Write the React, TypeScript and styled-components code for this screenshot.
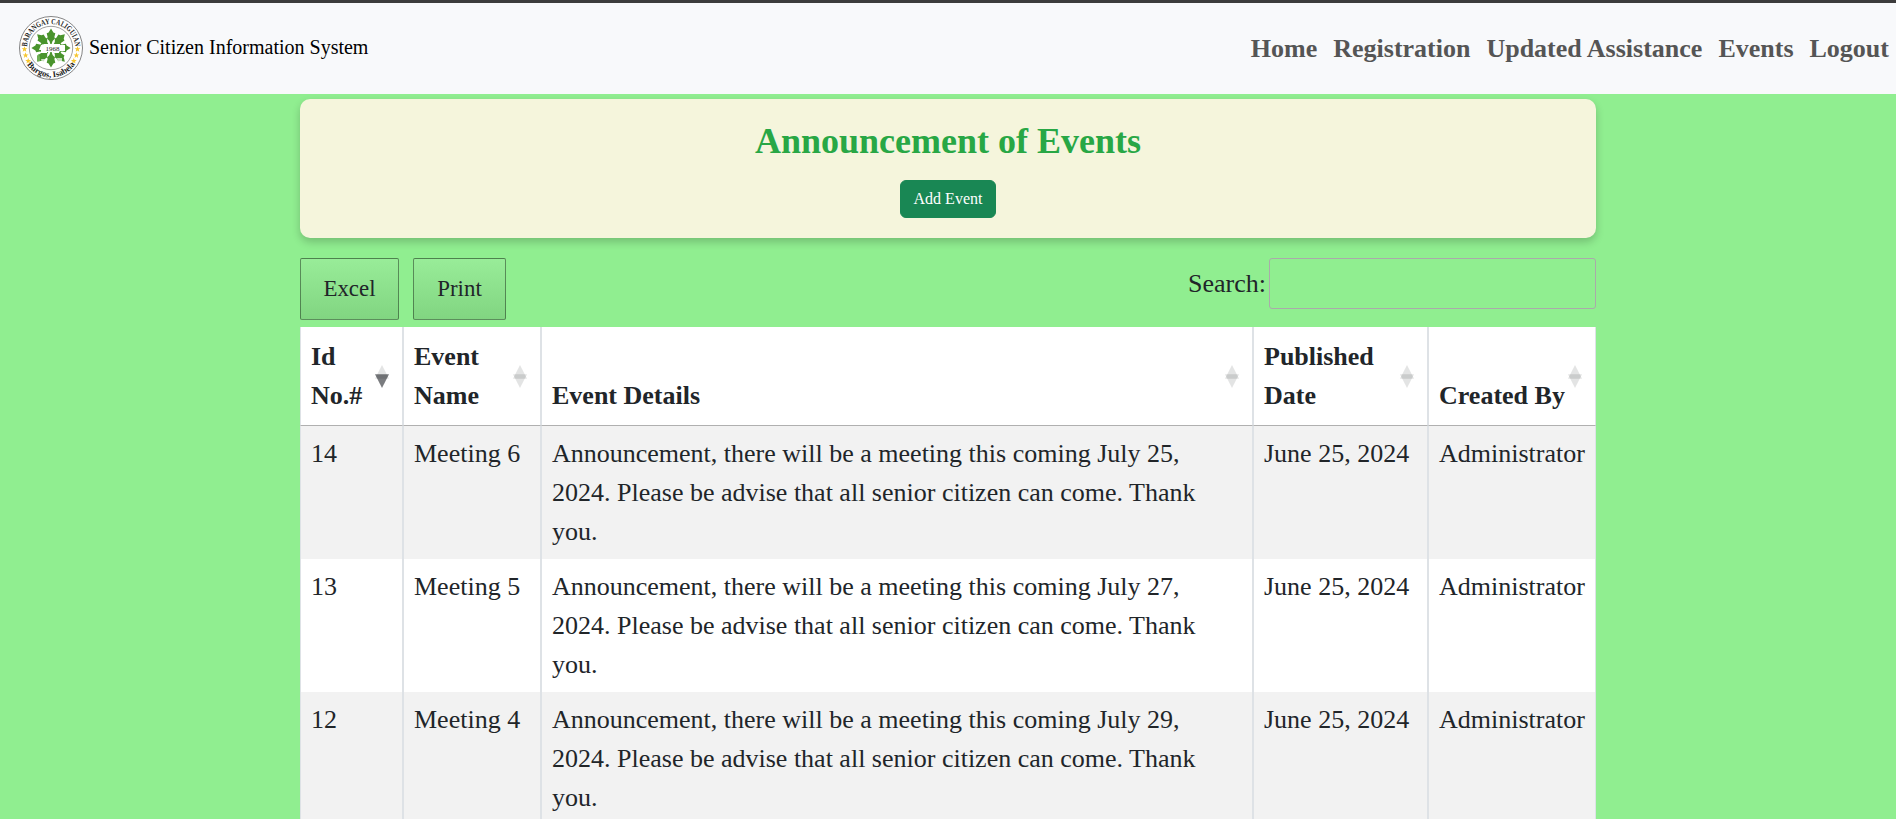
import React from 'react';
import styled, { createGlobalStyle, css } from 'styled-components';

const GlobalStyle = createGlobalStyle`
  *, *::before, *::after { box-sizing: border-box; }
  html, body { margin: 0; padding: 0; }
  body {
    height: 819px;
    overflow: hidden;
    background: #90ee90;
    color: #212529;
    font-family: 'Liberation Serif', 'Times New Roman', serif;
    font-size: 26px;
    line-height: 1.5;
  }
`;

const Page = styled.div`
  height: 819px;
  overflow: hidden;
`;

const Navbar = styled.header`
  display: flex;
  align-items: center;
  justify-content: space-between;
  height: 94px;
  padding: 0 7px 0 18px;
  border-top: 3px solid #3c3c3c;
  background: #f8f9fb;
`;

const Brand = styled.a`
  display: flex;
  align-items: center;
  gap: 5px;
  padding-bottom: 1px;
  color: #000;
  font-size: 20px;
  line-height: 30px;
  text-decoration: none;
`;

const BrandName = styled.span`
  padding-bottom: 3px;
`;

const Nav = styled.nav`
  display: flex;
  gap: 16px;
`;

const NavLink = styled.a`
  color: #555;
  font-weight: 700;
  line-height: 39px;
  text-decoration: none;
`;

const Container = styled.main`
  width: 1296px;
  margin: 0 auto;
  padding-top: 5px;
`;

const Card = styled.section`
  display: flex;
  flex-direction: column;
  align-items: center;
  height: 139px;
  padding-top: 21px;
  border-radius: 10px;
  background: #f5f5dc;
  box-shadow: 0 4px 8px rgba(0, 0, 0, 0.2);
`;

const Title = styled.h1`
  margin: 0 0 17px;
  color: #28a745;
  font-size: 36px;
  font-weight: 700;
  line-height: 43px;
`;

const AddButton = styled.button`
  width: 96px;
  height: 38px;
  padding: 0;
  border: 1px solid #198754;
  border-radius: 6px;
  background: #198754;
  color: #fff;
  font: 16px/24px 'Liberation Serif', 'Times New Roman', serif;
`;

const Toolbar = styled.div`
  display: flex;
  align-items: flex-start;
  justify-content: space-between;
  height: 69px;
  margin-top: 20px;
`;

const ButtonGroup = styled.div`
  display: flex;
  gap: 14px;
`;

const ExportButton = styled.button<{ $width: number }>`
  width: ${(p) => p.$width}px;
  height: 62px;
  padding: 0 0 2px;
  border: 1px solid rgba(0, 0, 0, 0.4);
  border-radius: 2px;
  background: linear-gradient(to bottom, rgba(230, 230, 230, 0.1) 0%, rgba(0, 0, 0, 0.1) 100%);
  color: #212529;
  font: 22.88px/37px 'Liberation Serif', 'Times New Roman', serif;
`;

const SearchLabel = styled.label`
  display: flex;
  align-items: center;
  gap: 3px;
`;

const SearchInput = styled.input`
  width: 327px;
  height: 51px;
  padding: 5px;
  border: 1px solid #aaa;
  border-radius: 3px;
  background: transparent;
  font: inherit;
`;

const Table = styled.table`
  width: 1296px;
  table-layout: fixed;
  border-collapse: separate;
  border-spacing: 0;
`;

const Column = styled.col<{ $width: number }>`
  width: ${(p) => p.$width}px;
`;

const cell = css`
  border-left: 1px solid #dee2e6;
  border-right: 1px solid #dee2e6;
  text-align: left;
`;

const HeadCell = styled.th`
  ${cell}
  position: relative;
  height: 99px;
  padding: 10px 0 10px 10px;
  border-bottom: 1px solid #b0b0b0;
  background: #fff;
  font-weight: 700;
  vertical-align: bottom;
`;

const HeadText = styled.span<{ $narrow?: boolean }>`
  display: block;
  width: ${(p) => (p.$narrow ? 'min-content' : 'auto')};
`;

const SortIcon = styled.svg`
  position: absolute;
  top: 38px;
  right: 13.5px;
  width: 14px;
  height: 23px;
`;

const Row = styled.tr`
  background: #fff;
  &:nth-child(odd) { background: #f2f2f2; }
`;

const Cell = styled.td`
  ${cell}
  padding: 8px 10px;
  vertical-align: top;
`;

const SealArt = styled.svg`
  display: block;
  width: 66px;
  height: 66px;
`;

const LEAF =
  'M0 -2 L-1.6 -7 L-4 -9.4 L-3.4 -11 L-4.3 -14.8 L-2.4 -15.6 L0 -19.6 L2.4 -15.6 L4.3 -14.8 L3.4 -11 L4 -9.4 L1.6 -7 Z';
const STAR =
  'M0 -3 L0.8 -0.9 L2.9 -0.9 L1.2 0.4 L1.8 2.6 L0 1.3 L-1.8 2.6 L-1.2 0.4 L-2.9 -0.9 L-0.8 -0.9 Z';
const STARS = [
  [-26.5, 1.2], [-25.4, 7.3], [-22.8, 13],
  [26.5, 1.2], [25.4, 7.3], [22.8, 13],
];

function Seal() {
  return (
    <SealArt viewBox="-33 -33 66 66" aria-hidden="true">
      <defs>
        <path id="seal-top" d="M-24 0 A24 24 0 0 1 24 0" />
        <path id="seal-bottom" d="M-28.6 4 A28.8 28.8 0 0 0 28.6 4" />
      </defs>
      <circle r="31.5" fill="#fff" stroke="#666" strokeWidth="0.8" />
      <circle r="21.7" fill="#fff" stroke="#777" strokeWidth="0.7" />
      {[0, 45, 90, 135, 180, 225, 270, 315].map((angle) => (
        <path key={angle} d={LEAF} fill="#4a942d" transform={`rotate(${angle})`} />
      ))}
      <path d="M-10 -3 H-7 V-4 H9 V-3 H14 V3 H8 V5 H3 V4 H-4 V5 H-10 V2 H-12 Z" fill="#fff" />
      <path d="M-14 13 V8 L-12.5 6 L-11 9 V13 Z" fill="#6fae55" />
      <path d="M-10 11 H-5 V14 H-9 Z M6 10 H11 V14 H7 Z" fill="#fff" opacity="0.7" />
      <text x="1.5" y="2.8" textAnchor="middle" fontSize="7" fill="#222">1968</text>
      {STARS.map(([x, y]) => (
        <path key={`${x},${y}`} d={STAR} fill="#f6c62f" transform={`translate(${x} ${y})`} />
      ))}
      <text fontSize="8" fontWeight="700" fill="#222">
        <textPath
          href="#seal-top"
          startOffset="50%"
          textAnchor="middle"
          textLength="72"
          lengthAdjust="spacingAndGlyphs"
        >
          BARANGAY CALIGUIAN
        </textPath>
      </text>
      <text fontSize="8.6" fontWeight="700" fill="#222">
        <textPath href="#seal-bottom" startOffset="50%" textAnchor="middle">
          Burgos, Isabela
        </textPath>
      </text>
    </SealArt>
  );
}

function SortArrows({ descending }: { descending?: boolean }) {
  return (
    <SortIcon viewBox="0 0 14 23" aria-hidden="true">
      <path d="M7 0 L14 13.7 H0 Z" fill="#212529" opacity="0.125" />
      <path d="M0 9.3 H14 L7 23 Z" fill="#212529" opacity={descending ? 0.6 : 0.125} />
    </SortIcon>
  );
}

const NAV_ITEMS = ['Home', 'Registration', 'Updated Assistance', 'Events', 'Logout'];

const COLUMNS = [
  { label: 'Id No.#', width: 103, narrow: true, descending: true },
  { label: 'Event Name', width: 138, narrow: true },
  { label: 'Event Details', width: 712 },
  { label: 'Published Date', width: 175, narrow: true },
  { label: 'Created By', width: 168 },
];

const EVENTS = [
  { id: 14, name: 'Meeting 6', day: 25 },
  { id: 13, name: 'Meeting 5', day: 27 },
  { id: 12, name: 'Meeting 4', day: 29 },
];

export default function App() {
  return (
    <Page>
      <GlobalStyle />
      <Navbar>
        <Brand>
          <Seal />
          <BrandName>Senior Citizen Information System</BrandName>
        </Brand>
        <Nav>
          {NAV_ITEMS.map((item) => (
            <NavLink key={item}>{item}</NavLink>
          ))}
        </Nav>
      </Navbar>
      <Container>
        <Card>
          <Title>Announcement of Events</Title>
          <AddButton>Add Event</AddButton>
        </Card>
        <Toolbar>
          <ButtonGroup>
            <ExportButton $width={99}>Excel</ExportButton>
            <ExportButton $width={93}>Print</ExportButton>
          </ButtonGroup>
          <SearchLabel>
            Search:
            <SearchInput type="search" />
          </SearchLabel>
        </Toolbar>
        <Table>
          <colgroup>
            {COLUMNS.map((c) => (
              <Column key={c.label} $width={c.width} />
            ))}
          </colgroup>
          <thead>
            <tr>
              {COLUMNS.map((c) => (
                <HeadCell key={c.label}>
                  <HeadText $narrow={c.narrow}>{c.label}</HeadText>
                  <SortArrows descending={c.descending} />
                </HeadCell>
              ))}
            </tr>
          </thead>
          <tbody>
            {EVENTS.map((e) => (
              <Row key={e.id}>
                <Cell>{e.id}</Cell>
                <Cell>{e.name}</Cell>
                <Cell>
                  {`Announcement, there will be a meeting this coming July ${e.day}, 2024. Please be advise that all senior citizen can come. Thank you.`}
                </Cell>
                <Cell>June 25, 2024</Cell>
                <Cell>Administrator</Cell>
              </Row>
            ))}
          </tbody>
        </Table>
      </Container>
    </Page>
  );
}
